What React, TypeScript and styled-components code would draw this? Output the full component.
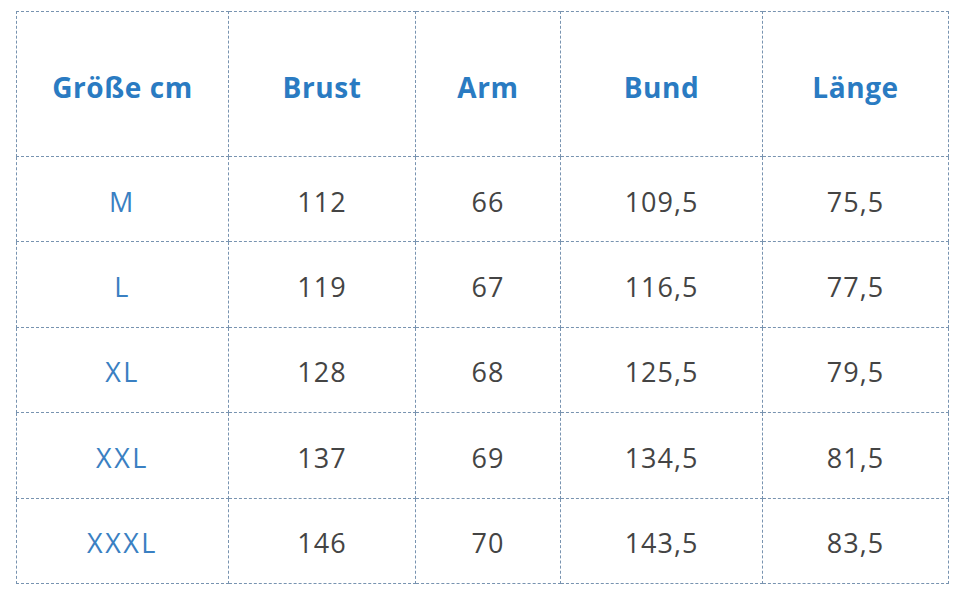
import React from "react";
import styled, { createGlobalStyle } from "styled-components";

const GlobalStyle = createGlobalStyle`
  html, body {
    margin: 0;
    padding: 0;
    background: #ffffff;
  }
`;

const headers = ["Größe cm", "Brust", "Arm", "Bund", "Länge"];
const widths = [212, 187, 145, 202, 186];

const rows: string[][] = [
  ["M", "112", "66", "109,5", "75,5"],
  ["L", "119", "67", "116,5", "77,5"],
  ["XL", "128", "68", "125,5", "79,5"],
  ["XXL", "137", "69", "134,5", "81,5"],
  ["XXXL", "146", "70", "143,5", "83,5"],
];

const App: React.FC = () => {
  return (
    <Page>
      <GlobalStyle />
      <SizeTable>
        <colgroup>
          {widths.map((w, i) => (
            <col key={i} style={{ width: w }} />
          ))}
        </colgroup>
        <thead>
          <tr>
            {headers.map((h) => (
              <HeadCell key={h}>{h}</HeadCell>
            ))}
          </tr>
        </thead>
        <tbody>
          {rows.map((row) => (
            <tr key={row[0]}>
              {row.map((value, i) => (
                <Cell key={i} $size={i === 0}>
                  {value}
                </Cell>
              ))}
            </tr>
          ))}
        </tbody>
      </SizeTable>
    </Page>
  );
};

export default App;

const Page = styled.div`
  width: 970px;
  height: 600px;
  padding: 11px 0 0 16px;
  box-sizing: border-box;
  font-family: "Open Sans", "Noto Sans", sans-serif;
`;

const SizeTable = styled.table`
  border-collapse: collapse;
  table-layout: fixed;
  width: 933px;
`;

const HeadCell = styled.th`
  height: 138px;
  padding: 6px 0 0;
  border: 1px dashed #7893b0;
  font-size: 28px;
  font-weight: 700;
  letter-spacing: 0.6px;
  color: #2a7bc2;
  text-align: center;
  vertical-align: middle;
`;

const Cell = styled.td<{ $size?: boolean }>`
  height: 80.4px;
  padding: 4px 0 0;
  border: 1px dashed #7893b0;
  font-size: 27px;
  font-weight: 400;
  color: ${({ $size }) => ($size ? "#3a80c2" : "#444444")};
  text-align: center;
  vertical-align: middle;
  letter-spacing: ${({ $size }) => ($size ? "2.5px" : "1px")};
`;
